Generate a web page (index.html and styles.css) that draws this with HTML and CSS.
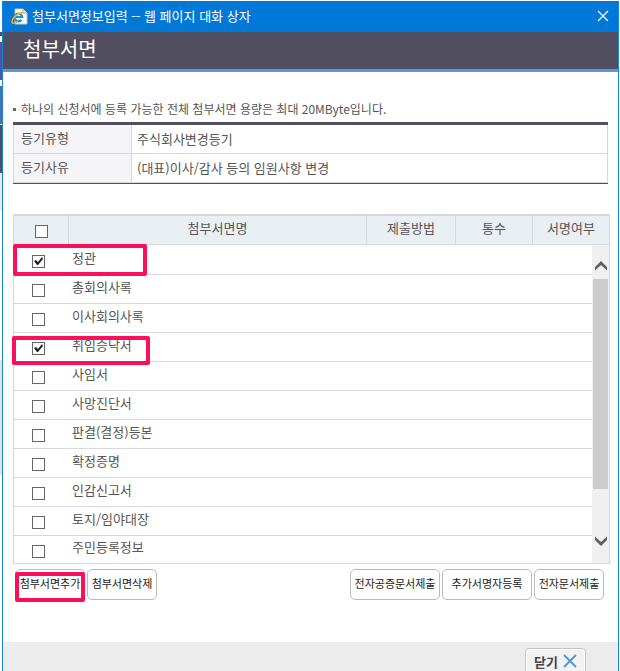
FILE: index.html
```html
<!DOCTYPE html>
<html lang="ko">
<head>
<meta charset="utf-8">
<title>첨부서면정보입력</title>
<link rel="stylesheet" href="styles.css">
</head>
<body>

<div class="dialog">
    <div class="titlebar">
        <svg class="ie-icon" width="17" height="17" viewBox="0 0 17 17">
            <path d="M4 1h8l4 4v11H4z" fill="#fdfdf8" stroke="#c9c6b8" stroke-width="1"/>
            <path d="M12 1v4h4" fill="#e4e2d8" stroke="#b9b6a8" stroke-width="1"/>
            <path d="M10.500 11.800a3.800 3.800 0 1 1 .7-2.800H4" fill="none" stroke="#1b8fdc" stroke-width="2.200"/>
            <path d="M1.500 15C-.5 12 5 5.500 12 4.500M1.500 15c2 1 4-.5 5.500-1.500" fill="none" stroke="#f0b429" stroke-width="1.500"/>
        </svg>
        <span class="titlebar-text">첨부서면정보입력 -- 웹 페이지 대화 상자</span>
        <button class="titlebar-close" aria-label="닫기">
            <svg width="12" height="12" viewBox="0 0 12 12">
                <path d="M1 1l10 10M11 1L1 11" stroke="#fff" stroke-width="1.200"/>
            </svg>
        </button>
    </div>

    <h1 class="header">첨부서면</h1>

    <div class="content">
        <p class="notice">하나의 신청서에 등록 가능한 전체 첨부서면 용량은 최대 20MByte입니다.</p>

        <table class="info">
            <tr>
                <th>등기유형</th>
                <td>주식회사변경등기</td>
            </tr>
            <tr>
                <th>등기사유</th>
                <td>(대표)이사/감사 등의 임원사항 변경</td>
            </tr>
        </table>

        <div class="grid">
            <table class="grid-head">
                <tr>
                    <th class="col-check"><input type="checkbox" aria-label="전체 선택"></th>
                    <th>첨부서면명</th>
                    <th class="col-method">제출방법</th>
                    <th class="col-count">통수</th>
                    <th class="col-sign">서명여부</th>
                </tr>
            </table>
            <div class="grid-body">
                <ul class="list">
                    <li class="marked"><input type="checkbox" id="doc1" checked><label for="doc1">정관</label></li>
                    <li><input type="checkbox" id="doc2"><label for="doc2">총회의사록</label></li>
                    <li><input type="checkbox" id="doc3"><label for="doc3">이사회의사록</label></li>
                    <li class="marked marked-wide"><input type="checkbox" id="doc4" checked><label for="doc4">취임승낙서</label></li>
                    <li><input type="checkbox" id="doc5"><label for="doc5">사임서</label></li>
                    <li><input type="checkbox" id="doc6"><label for="doc6">사망진단서</label></li>
                    <li><input type="checkbox" id="doc7"><label for="doc7">판결(결정)등본</label></li>
                    <li><input type="checkbox" id="doc8"><label for="doc8">확정증명</label></li>
                    <li><input type="checkbox" id="doc9"><label for="doc9">인감신고서</label></li>
                    <li><input type="checkbox" id="doc10"><label for="doc10">토지/임야대장</label></li>
                    <li><input type="checkbox" id="doc11"><label for="doc11">주민등록정보</label></li>
                </ul>
                <div class="scrollbar">
                    <button class="scroll-up" aria-label="위로">
                        <svg width="12" height="10" viewBox="0 0 12 10">
                            <path d="M0 6l6-6 6 6v3.500L6 4 0 9.500z" fill="#606060"/>
                        </svg>
                    </button>
                    <div class="scroll-track"><div class="scroll-thumb"></div></div>
                    <button class="scroll-down" aria-label="아래로">
                        <svg width="12" height="10" viewBox="0 0 12 10">
                            <path d="M0 4l6 6 6-6V.5L6 6 0 .5z" fill="#606060"/>
                        </svg>
                    </button>
                </div>
            </div>
        </div>

        <div class="actions">
            <button class="btn marked-btn">첨부서면추가</button>
            <button class="btn">첨부서면삭제</button>
            <button class="btn btn-wide push">전자공증문서제출</button>
            <button class="btn btn-wide">추가서명자등록</button>
            <button class="btn">전자문서제출</button>
        </div>
    </div>

    <div class="footer">
        <button class="btn-close">닫기
            <svg width="14" height="14" viewBox="0 0 14 14">
                <path d="M1 1l12 12M13 1L1 13" stroke="#4f9ad6" stroke-width="2"/>
            </svg>
        </button>
    </div>
</div>

</body>
</html>
```
FILE: styles.css
```css
*,
*::before,
*::after {
    box-sizing: border-box;
}
/* the opener page shows as a thin strip on the left of the dialog */
body {
    display: flex;
    height: 100vh;
    margin: 0;
    padding: 1px 1px 0 2px;
    overflow: hidden;
    font-family: "Noto Sans CJK KR", sans-serif;
    font-size: 13px;
    line-height: 18px;
    color: #555;
    background: linear-gradient(#fff 32px, #504e5f 32px 36px, #fff 36px 42px, #5553a0 42px 80px, #fff 80px 86px, #4272ae 86px 124px, #fff 124px 125px, #504e5f 125px 173px, #e9e9e9 173px 211px, #fff 211px 360px, #e3e3e3 360px 475px, #fff 475px) left top / 2px 100% no-repeat #fff;
}
button {
    font-family: inherit;
    cursor: pointer;
}
.dialog {
    display: flex;
    flex-direction: column;
    flex: 1;
    border: 1px solid #1883d7;
    border-top: 0;
    border-bottom: 0;
    background-color: #fff;
}
.titlebar {
    display: flex;
    align-items: center;
    flex-shrink: 0;
    height: 31px;
    padding: 0 9px 1px 8px;
    color: #fff;
    background-color: #0078d7;
}
.titlebar-text {
    flex: 1;
    margin-left: 4px;
}
.titlebar-close {
    display: flex;
    padding: 0;
    border: 0;
    background: none;
}
.header {
    flex-shrink: 0;
    height: 40px;
    margin: 0;
    padding: 2px 20px;
    font-size: 20px;
    font-weight: normal;
    line-height: 30px;
    color: #fff;
    background-color: #504e5f;
    border-bottom: 3px solid #5b9bd5;
}
.content {
    flex: 1;
    padding: 28px 8px 0 10px;
}
.notice {
    display: flex;
    align-items: center;
    gap: 5px;
    margin: 0 0 4px;
    font-size: 12px;
}
.notice::before {
    content: "";
    width: 3px;
    height: 3px;
    background-color: #666;
}
.info {
    width: calc(100% - 2px);
    border-collapse: separate;
    border-spacing: 0;
    border-top: 3px solid #504e5f;
    border-bottom: 1px solid #504e5f;
}
.info th,
.info td {
    height: 29px;
    padding: 0 5px;
    font-weight: normal;
    text-align: left;
    border-right: 1px solid #d8d8dc;
    border-bottom: 1px solid #d8d8dc;
}
.info th {
    width: 119px;
    padding: 0 7px 2px;
    border-left: 1px solid #d8d8dc;
    background-color: #f5f5f8;
}
.grid {
    margin-top: 30px;
    border: 1px solid #d8d8dc;
    border-top-width: 2px;
}
.grid-head {
    width: 100%;
    table-layout: fixed;
    border-collapse: separate;
    border-spacing: 0;
    background-color: #eaeff3;
}
.grid-head th {
    height: 29px;
    padding: 0 0 4px;
    font-weight: normal;
    border-right: 1px solid #d8d8dc;
    border-bottom: 1px solid #d8d8dc;
}
.grid-head th:last-child {
    border-right: 0;
}
.grid-head .col-check {
    width: 55px;
    padding: 2px 0 0;
}
.grid-head .col-check input {
    display: block;
    margin: 0 auto;
}
.grid-head .col-method {
    width: 89px;
}
.grid-head .col-count {
    width: 77px;
}
.grid-head .col-sign {
    width: 76px;
}
input[type="checkbox"] {
    appearance: none;
    flex-shrink: 0;
    width: 13px;
    height: 13px;
    margin: 0;
    border: 1px solid #666;
    background-color: #fff;
}
input[type="checkbox"]:checked::before {
    content: "";
    display: block;
    width: 11px;
    height: 11px;
    background-color: #222;
    clip-path: polygon(1px 5px, 3px 4px, 5px 6px, 9px 1px, 10px 3px, 5px 9px, 4px 9px);
}
.grid-body {
    display: flex;
}
.list {
    flex: 1;
    margin: 0;
    padding: 1px 0 0;
    list-style: none;
}
.list li {
    position: relative;
    display: flex;
    align-items: center;
    height: 29px;
    padding: 3px 0 0 18px;
    border-bottom: 1px solid #d8d8dc;
}
.list li:last-child {
    height: 27px;
    border-bottom: 0;
}
.list label {
    margin-left: 27px;
    padding-bottom: 8px;
}
/* red marker boxes */
.marked::after,
.marked-btn::after {
    content: "";
    position: absolute;
    border: 4px solid #fc0f5a;
    border-radius: 2px;
    pointer-events: none;
}
.marked::after {
    top: -2px;
    left: -1px;
    width: 134px;
    height: 32px;
}
.marked-wide::after {
    top: 3px;
    left: -2px;
    width: 138px;
    height: 29px;
}
.marked-btn::after {
    top: 2px;
    left: -1px;
    width: 70px;
    height: 30px;
}
.scrollbar {
    display: flex;
    flex-direction: column;
    width: 17px;
    background-color: #f0f0f0;
}
.scrollbar button {
    display: flex;
    justify-content: center;
    align-items: center;
    height: 34px;
    padding: 8px 0 0;
    border: 0;
    background: none;
}
.scrollbar .scroll-down {
    padding: 0 0 10px;
}
.scroll-track {
    flex: 1;
    padding: 0 1px;
}
.scroll-thumb {
    height: 84%;
    background-color: #cdcdcd;
}
.actions {
    display: flex;
    gap: 2px;
    padding: 5px 6px 0 2px;
}
.btn {
    position: relative;
    width: 70px;
    height: 31px;
    padding: 0 0 4px;
    font-size: 11px;
    white-space: nowrap;
    color: #222;
    background-color: #fff;
    border: 1px solid #bbb;
    border-radius: 5px;
}
.btn-wide {
    width: 90px;
}
.push {
    margin-left: auto;
}
.footer {
    display: flex;
    justify-content: flex-end;
    align-items: flex-start;
    flex-shrink: 0;
    height: 29px;
    padding: 6px 32px 0 0;
    overflow: hidden;
    background-color: #ececec;
}
.btn-close {
    display: flex;
    justify-content: center;
    align-items: center;
    gap: 5px;
    flex-shrink: 0;
    width: 61px;
    height: 28px;
    padding: 0 0 2px;
    font-size: 13px;
    font-weight: bold;
    color: #444;
    background-color: #f2f2f2;
    border: 1px solid #c4c4c4;
    border-radius: 4px;
    box-shadow: inset 0 0 0 1px #fff;
}
```
